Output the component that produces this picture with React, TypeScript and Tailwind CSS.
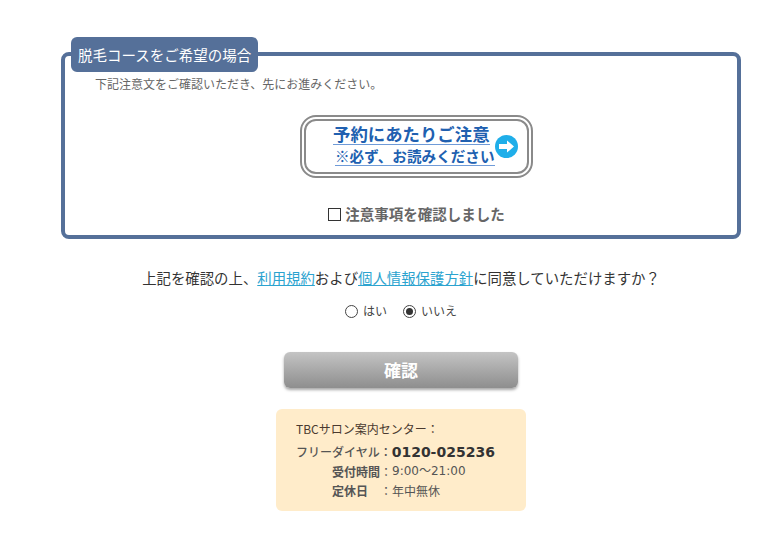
import React from 'react';

const jp = "font-['Meiryo','Noto_Sans_CJK_JP','Noto_Sans',sans-serif]";

const NoticeButton = () => {
  return (
    <a href="#" className="block w-[233px] h-[63px] mx-auto rounded-[16px] border-[2px] border-[#8a8a8a] p-[2px] bg-white">
      <div className="relative flex flex-col items-start h-full rounded-[12px] border-[2px] border-[#8a8a8a] pl-[27px] pt-[2px]">
        <span className="block text-[17.4px] leading-[21px] font-bold text-[#2060b0] border-b border-[#6f9bd8] whitespace-nowrap">予約にあたりご注意</span>
        <span className="block mt-[1px] ml-[2px] text-[14.6px] leading-[19px] font-bold text-[#2060b0] border-b border-[#6f9bd8] whitespace-nowrap">※必ず、お読みください</span>
        <svg className="absolute left-[189px] top-[14px]" width="23" height="23" viewBox="0 0 23 23">
          <circle cx="11.5" cy="11.5" r="11.5" fill="#1faee9" />
          <path d="M4 9h8V5.5l7 6-7 6V14H4z" fill="#ffffff" />
        </svg>
      </div>
    </a>
  );
};

const App = () => {
  return (
    <div className={`${jp} w-[778px] h-[539px] bg-white overflow-hidden pt-[37px] text-[#333]`}>
      <div className="w-[680px] ml-[61px]">
        <div className="relative mt-[15px] h-[187px] rounded-[8px] border-[4px] border-[#557099]">
          <h3 className="absolute left-[6px] top-[-19px] w-[187px] h-[35px] rounded-[6px] bg-[#557099] text-white text-[14.5px] leading-[35px] pl-[7px] font-normal whitespace-nowrap">
            脱毛コースをご希望の場合
          </h3>
          <p className="pl-[30px] pt-[19px] text-[12px] leading-[18px] text-[#666]">
            下記注意文をご確認いただき、先にお進みください。
          </p>
          <div className="mt-[22px] pl-[31px]">
            <NoticeButton />
          </div>
          <label className="flex items-center justify-center mt-[26px] pl-[31px] text-[14.5px] leading-[20px] font-bold text-[#666]">
            <span className="inline-block w-[13px] h-[13px] border border-[#333] bg-white mr-[4px]" />
            注意事項を確認しました
          </label>
        </div>

        <p className="mt-[29px] text-center text-[14.4px] leading-[20px] text-[#333] whitespace-nowrap">
          上記を確認の上、<a href="#" className="text-[#2ba3cf] underline">利用規約</a>および<a href="#" className="text-[#2ba3cf] underline">個人情報保護方針</a>に同意していただけますか？
        </p>

        <div className="flex justify-center items-center mt-[13px] text-[12px] leading-[20px] text-[#444]">
          <span className="w-[13px] h-[13px] rounded-full border border-[#444] mr-[5px]" />
          <span className="mr-[16px]">はい</span>
          <span className="flex items-center justify-center w-[13px] h-[13px] rounded-full border border-[#444] mr-[5px]">
            <span className="w-[7px] h-[7px] rounded-full bg-[#333]" />
          </span>
          <span>いいえ</span>
        </div>

        <button className="block w-[234px] h-[36px] mx-auto mt-[31px] pb-[1px] rounded-[6px] bg-gradient-to-b from-[#c4c4c4] to-[#8e8e8e] shadow-[0_2px_3px_rgba(0,0,0,0.35)] text-white text-[17px] font-bold">
          確認
        </button>

        <div className="w-[250px] h-[102px] mx-auto mt-[21px] rounded-[6px] bg-[#ffecca] pl-[20px] pt-[11px] text-[12px] text-[#555]">
          <p className="leading-[18px] text-[#4a3a30]">TBCサロン案内センター：</p>
          <p className="flex items-center mt-[4px] leading-[20px] font-medium whitespace-nowrap">
            フリーダイヤル：<span className="text-[14px] font-bold text-[#333] font-['DejaVu_Sans',sans-serif]">0120-025236</span>
          </p>
          <p className="flex pl-[36px] leading-[19px] whitespace-nowrap">
            <span className="font-bold">受付時間</span><span>：</span><span className="font-['DejaVu_Sans','Noto_Sans_CJK_JP',sans-serif]">9:00～21:00</span>
          </p>
          <p className="flex pl-[36px] leading-[19px] whitespace-nowrap">
            <span className="font-bold w-[48px]">定休日</span><span>：</span><span>年中無休</span>
          </p>
        </div>
      </div>
    </div>
  );
};

export default App;
